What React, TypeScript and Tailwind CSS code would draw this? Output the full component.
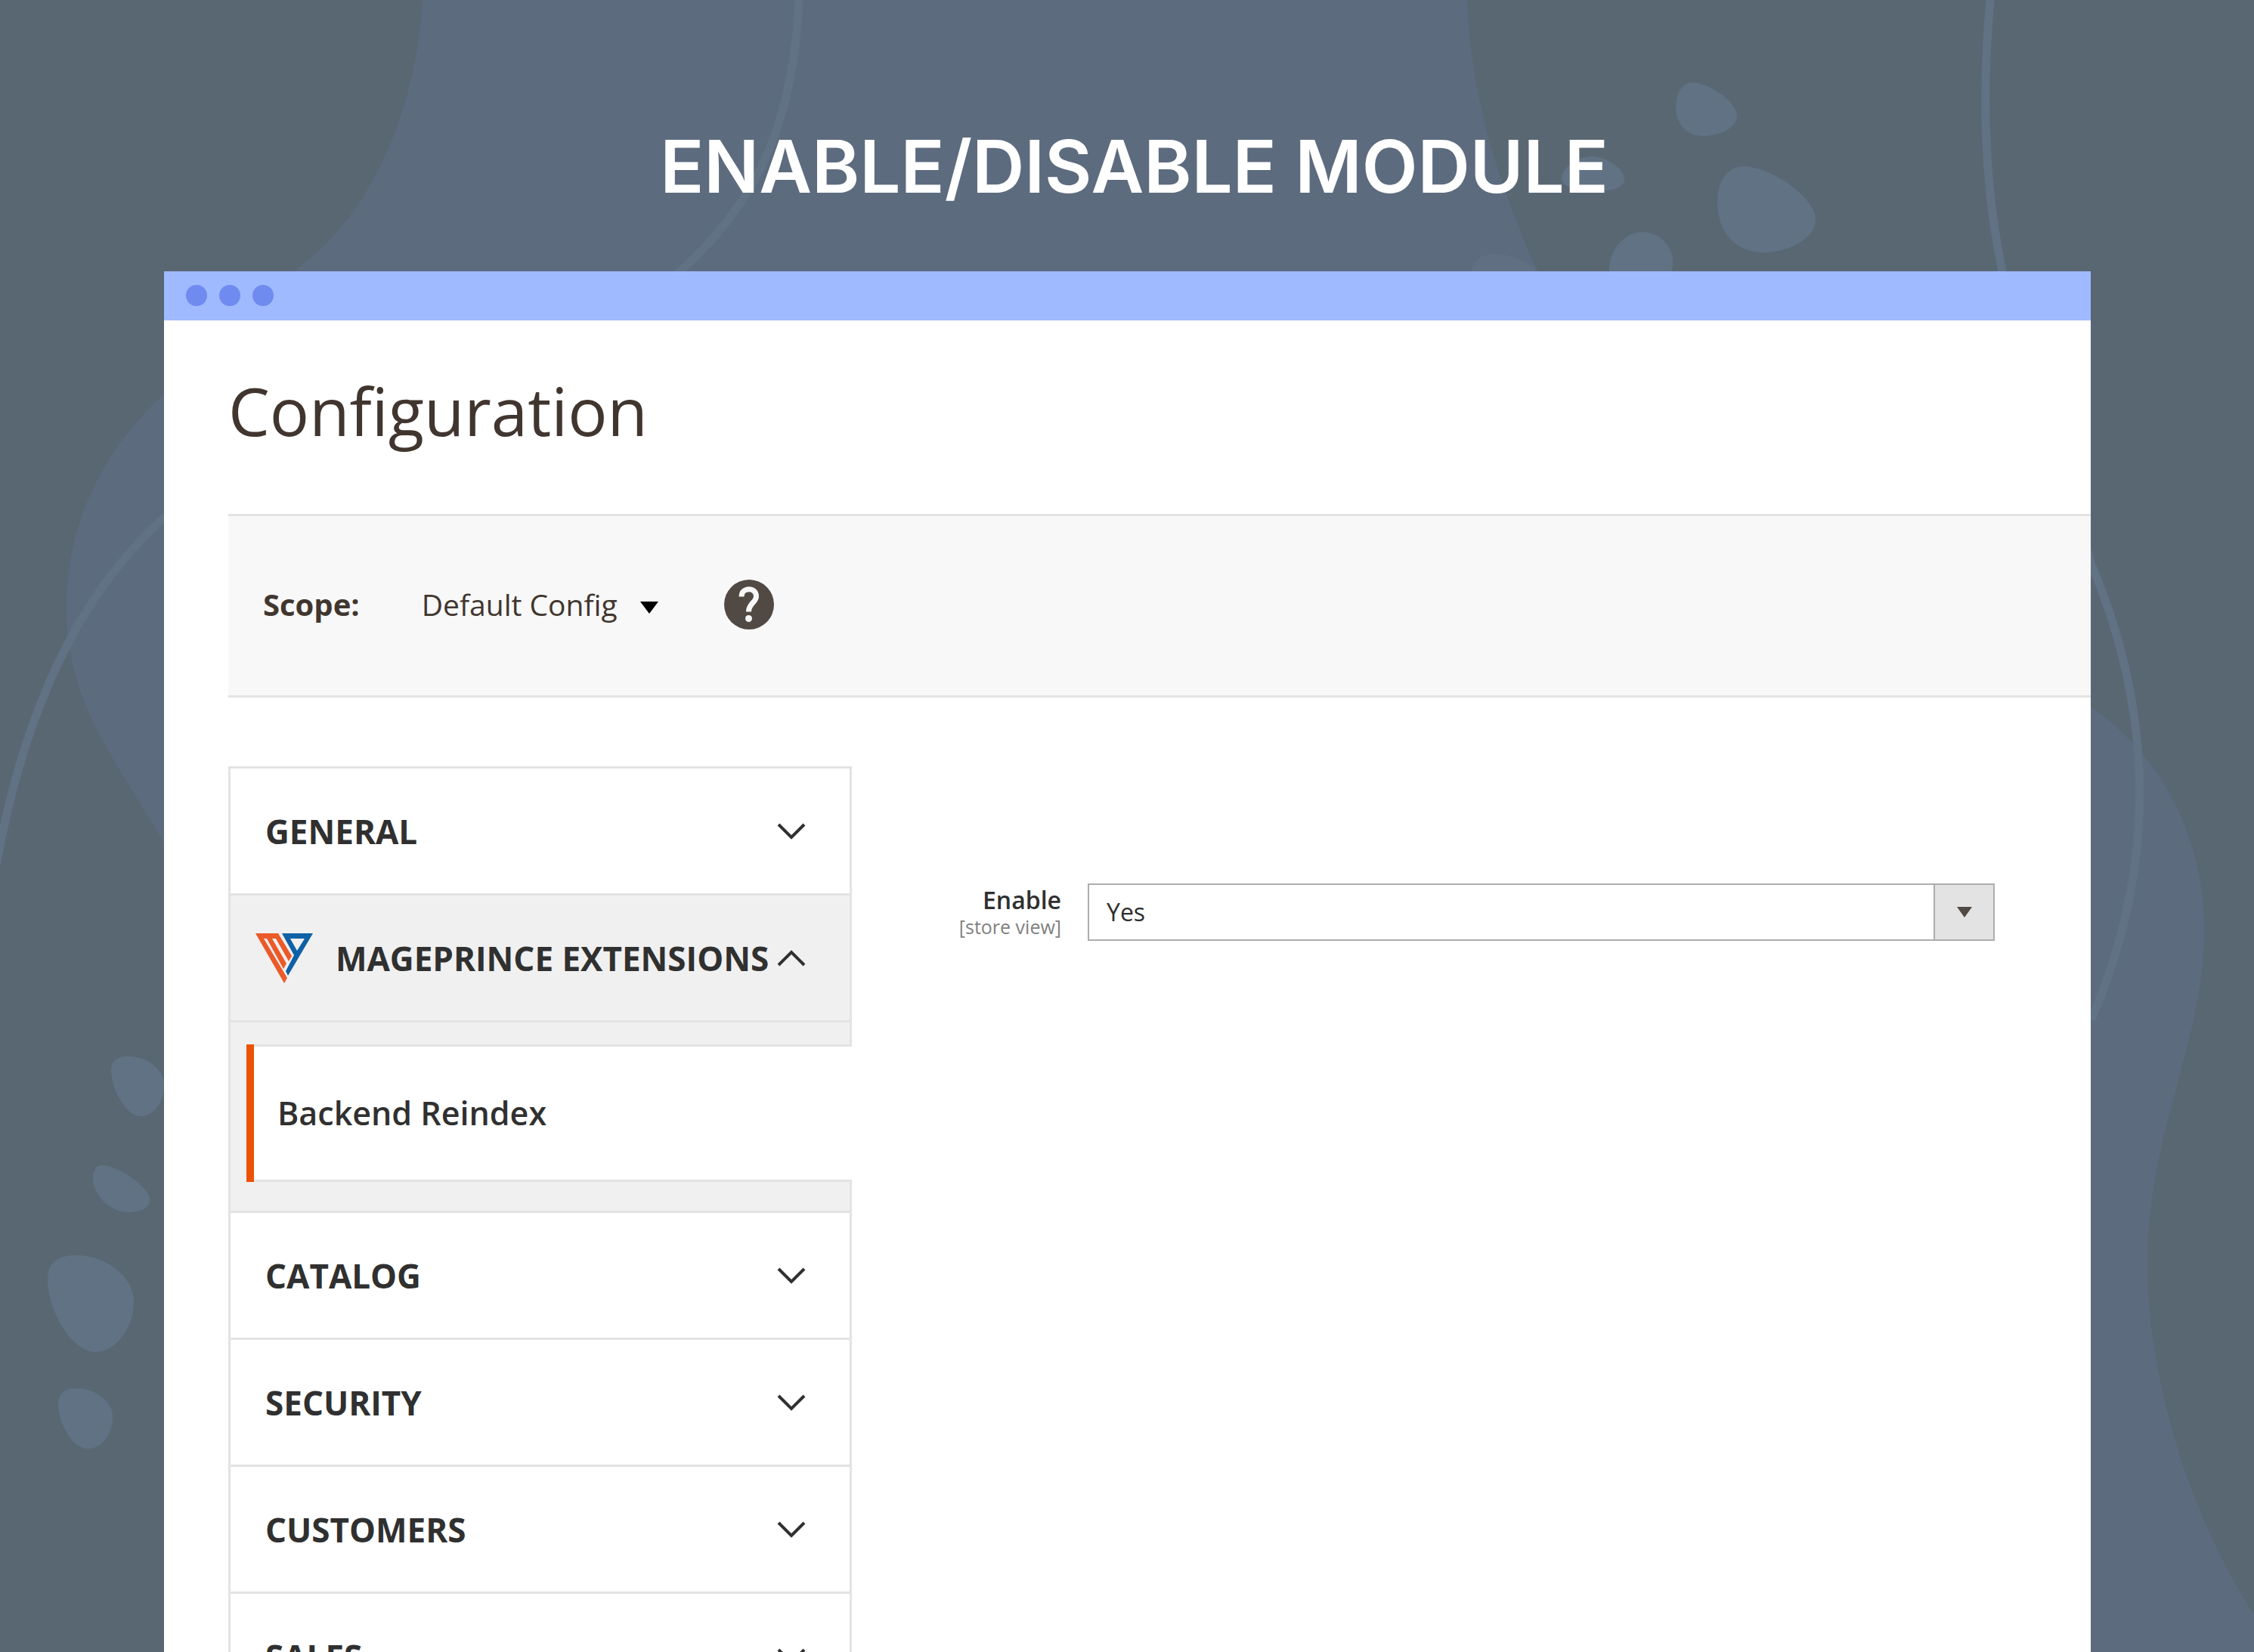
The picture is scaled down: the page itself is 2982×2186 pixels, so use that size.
import React from "react";

function Backdrop() {
  return (
    <svg
      className="absolute inset-0 h-full w-full"
      viewBox="0 0 2982 2186"
      preserveAspectRatio="xMidYMin slice"
      aria-hidden="true"
    >
      <path
        fill="#5d6b7e"
        d="M559 0C552 130 500 280 389 359C340 420 270 470 217 522C140 590 88 690 88 804C88 930 150 1000 217 1115C400 1500 800 2186 1000 2186H2982V2137C2900 2010 2841 1830 2841 1670C2841 1500 2916 1380 2916 1229C2916 1110 2860 1000 2767 936C2500 760 2150 640 2034 359C1980 240 1945 120 1941 0Z"
      />
      <g fill="none" stroke="#617284" strokeWidth="11">
        <path d="M1057 0C1050 150 1010 260 900 359C650 560 400 540 217 685C100 790 30 950 -5 1145" />
        <path d="M2633 0C2622 120 2624 240 2649 359C2670 500 2730 620 2767 747C2852 950 2852 1150 2767 1349" />
      </g>
      <g fill="#617284">
        <path d="M2240 109C2264 111 2298 135 2298 154C2298 168 2276 180 2254 180C2230 180 2217 162 2217 143C2217 122 2226 109 2240 109Z" />
        <path d="M2106 207C2128 208 2149 224 2149 238C2149 248 2133 253 2112 253C2084 253 2066 247 2066 236C2066 222 2086 207 2106 207Z" />
        <path d="M2308 220C2346 222 2402 262 2402 291C2402 314 2368 334 2333 334C2292 334 2272 303 2272 267C2272 238 2286 220 2308 220Z" />
        <path d="M2173 307C2197 307 2213 327 2213 346C2213 372 2195 390 2170 390C2146 390 2129 376 2129 356C2129 330 2150 307 2173 307Z" />
        <path fill="#607082" d="M1977 336C2000 336 2020 346 2034 359L2034 380H1946V359C1949 345 1960 336 1977 336Z" />
        <path d="M170 1398C196 1398 217 1416 217 1436C217 1458 204 1477 186 1477C166 1477 147 1440 147 1416C147 1403 156 1398 170 1398Z" />
        <path d="M134 1542C158 1542 198 1572 198 1587C198 1598 188 1604 170 1604C144 1604 123 1580 123 1559C123 1549 127 1542 134 1542Z" />
        <path d="M100 1661C142 1661 177 1690 177 1723C177 1758 152 1789 126 1789C96 1789 63 1736 63 1693C63 1671 77 1661 100 1661Z" />
        <path d="M100 1837C127 1837 149 1855 149 1875C149 1899 134 1917 116 1917C96 1917 77 1884 77 1858C77 1844 86 1837 100 1837Z" />
      </g>
    </svg>
  );
}

function Chevron({ open = false }: { open?: boolean }) {
  return (
    <svg className="h-[22px] w-[38px] shrink-0" viewBox="0 0 38 22" aria-hidden="true">
      <path
        d={open ? "M2 20L19 3L36 20" : "M2 2L19 19L36 2"}
        fill="none"
        stroke="#303030"
        strokeWidth="4"
      />
    </svg>
  );
}

function MageprinceLogo() {
  return (
    <svg className="h-[66px] w-[76px] shrink-0" viewBox="0 0 76 66" aria-hidden="true">
      <path
        fill="#eb5a28"
        d="M0 0H30L48 30L44 37L27 7H22L41 40L37 47L15 7H11L42 59L38 66Z"
      />
      <path fill="#0f61a5" fillRule="evenodd" d="M35 0H76L43 56L40 50L51 29ZM46 7L55 23L65 7Z" />
    </svg>
  );
}

function SectionHeader({
  label,
  open = false,
  logo = false,
}: {
  label: string;
  open?: boolean;
  logo?: boolean;
}) {
  return (
    <button
      type="button"
      aria-expanded={open}
      className={
        "flex h-[168px] w-full items-center justify-between border-b-3 border-[#e3e3e3] pr-[58px] text-left text-[44px] leading-[60px] font-bold text-[#303030] uppercase " +
        (open ? "bg-[#f0f0f0] " : "bg-white ") +
        (logo ? "pl-[33px]" : "pl-[46px]")
      }
    >
      <span className="flex items-center gap-[30px] whitespace-nowrap">
        {logo && <MageprinceLogo />}
        {label}
      </span>
      <Chevron open={open} />
    </button>
  );
}

function Sidebar() {
  return (
    <nav
      aria-label="Configuration sections"
      className="w-[825px] shrink-0 border-3 border-b-0 border-[#e3e3e3]"
    >
      <SectionHeader label="General" />
      <SectionHeader label="Mageprince Extensions" open logo />
      <div className="border-b-3 border-[#e3e3e3] bg-[#f0f0f0] pt-[29px] pb-[38px] pl-[21px]">
        <a
          href="#backend-reindex"
          className="-mr-[3px] flex border-l-10 border-[#eb5202] bg-white text-[43px] leading-[60px] font-semibold text-[#303030]"
        >
          <span className="flex h-[182px] flex-1 items-center border-y-3 border-[#e3e3e3] pl-[31px]">
            Backend Reindex
          </span>
        </a>
      </div>
      <SectionHeader label="Catalog" />
      <SectionHeader label="Security" />
      <SectionHeader label="Customers" />
      <SectionHeader label="Sales" />
    </nav>
  );
}

function ScopeBar() {
  return (
    <div className="flex h-[243px] items-center border-y-3 border-[#e3e3e3] bg-[#f8f8f8] pb-1 pl-[46px] leading-[54px] text-[#41362f]">
      <span className="text-[40px] font-bold">Scope:</span>
      <button type="button" className="ml-[82px] flex items-center gap-[30px] text-[39px]">
        Default Config
        <svg className="mt-2 h-[16px] w-[24px]" viewBox="0 0 24 16" aria-hidden="true">
          <path d="M0 0H24L12 16Z" fill="#000" />
        </svg>
      </button>
      <a href="#help" aria-label="Help" className="ml-[87px]">
        <svg className="h-[66px] w-[66px]" viewBox="0 0 66 66" aria-hidden="true">
          <circle cx="33" cy="33" r="33" fill="#514943" />
          <path
            d="M23 22.500C23 9.500 42.500 9.500 42.500 22C42.500 30.500 32.500 31 32.500 42.500"
            fill="none"
            stroke="#f8f8f8"
            strokeWidth="7"
          />
          <circle cx="32.500" cy="51.500" r="4.500" fill="#f8f8f8" />
        </svg>
      </a>
    </div>
  );
}

function EnableField() {
  return (
    <div className="flex flex-1 items-start gap-[35px] pt-[155px] pr-[127px]">
      <label htmlFor="enable" className="w-[277px] shrink-0 text-right">
        <span className="block text-[32px] leading-[44px] font-semibold text-[#303030]">Enable</span>
        <span className="block text-[25px] leading-[26px] text-[#808080]">[store view]</span>
      </label>
      <div className="relative h-[76px] flex-1">
        <select
          id="enable"
          defaultValue="Yes"
          className="h-full w-full appearance-none rounded-none border-2 border-[#adadad] bg-white pl-[23px] text-[32px] leading-[44px] text-[#303030]"
        >
          <option>Yes</option>
          <option>No</option>
        </select>
        <span className="pointer-events-none absolute inset-y-0 right-0 flex w-[81px] items-center justify-center border-2 border-[#adadad] bg-[#e3e3e3]">
          <svg className="h-[14px] w-[20px]" viewBox="0 0 20 14" aria-hidden="true">
            <path d="M0 0H20L10 14Z" fill="#514943" />
          </svg>
        </span>
      </div>
    </div>
  );
}

export default function App() {
  return (
    <div className="relative h-screen overflow-hidden bg-[#596773] font-['Open_Sans','Noto_Sans',sans-serif]">
      <Backdrop />
      <div className="relative pr-[216px] pl-[217px]">
        <h1 className="pt-[160px] pb-[79px] pl-[18px] text-center font-['Inter',sans-serif] text-[96px] leading-[120px] font-semibold whitespace-nowrap text-white uppercase">
          Enable/Disable Module
        </h1>
        <div className="min-h-screen bg-white">
          <div className="flex h-[65px] items-center gap-4 bg-[#a0baff] pb-0.5 pl-[29px]">
            <span className="size-[28px] rounded-full bg-[#6f8bf0]" />
            <span className="size-[28px] rounded-full bg-[#6f8bf0]" />
            <span className="size-[28px] rounded-full bg-[#6f8bf0]" />
          </div>
          <main className="pl-[85px]">
            <h2 className="pt-[59px] pb-[77px] text-[87px] leading-[120px] text-[#41362f]">
              Configuration
            </h2>
            <ScopeBar />
            <div className="flex pt-[91px]">
              <Sidebar />
              <EnableField />
            </div>
          </main>
        </div>
      </div>
    </div>
  );
}
